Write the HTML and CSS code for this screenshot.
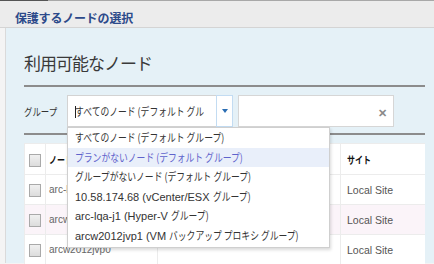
FILE: index.html
```
<!DOCTYPE html>
<html lang="ja">
<head>
    <meta charset="UTF-8">
    <title>保護するノードの選択</title>
    <link rel="stylesheet" href="styles.css">
</head>
<body>

<div class="topline"><span class="tab-edge"></span></div>
<header class="wizard-title">保護するノードの選択</header>

<div class="panel">
    <h2>利用可能なノード</h2>
    <div class="rule first"></div>

    <div class="filter-row">
        <label class="filter-label"><span class="t">グループ</span></label>
        <div class="combo">
            <div class="combo-text"><span class="caret"></span><span class="t">すべてのノード (デフォルト グループ)</span></div>
            <div class="combo-btn"><span class="arrow"></span></div>

            <!-- open list, drawn over the table -->
            <ul class="combo-list">
                <li><span class="t">すべてのノード (デフォルト グループ)</span></li>
                <li class="hover"><span class="t">プランがないノード (デフォルト グループ)</span></li>
                <li><span class="t">グループがないノード (デフォルト グループ)</span></li>
                <li><span class="en">10.58.174.68 (vCenter/ESX </span><span class="t">グループ)</span></li>
                <li><span class="en">arc-lqa-j1 (Hyper-V </span><span class="t">グループ)</span></li>
                <li><span class="en">arcw2012jvp1 (VM </span><span class="t">バックアップ プロキシ グループ)</span></li>
            </ul>
        </div>
        <div class="search">
            <span class="clear">&#x2715;</span>
        </div>
    </div>

    <div class="rule second"></div>

    <table class="node-table">
        <tr class="head">
            <td class="chk"><span class="box"></span></td>
            <td class="name"><span class="t">ノード名</span></td>
            <td class="mid"></td>
            <td class="site"><span class="t">サイト</span></td>
        </tr>
        <tr>
            <td class="chk"><span class="box"></span></td>
            <td class="name">arc-lqa-j1</td>
            <td class="mid"></td>
            <td class="site">Local Site</td>
        </tr>
        <tr class="alt">
            <td class="chk"><span class="box"></span></td>
            <td class="name">arcw2012jvp1</td>
            <td class="mid"></td>
            <td class="site">Local Site</td>
        </tr>
        <tr>
            <td class="chk"><span class="box"></span></td>
            <td class="name">arcw2012jvp0</td>
            <td class="mid"></td>
            <td class="site">Local Site</td>
        </tr>
    </table>
</div>

</body>
</html>
```

FILE: styles.css
```
body {
    margin: 0;
    width: 434px;
    height: 264px;
    overflow: hidden;
    background-color: #f4f4f4;
    font-family: "Noto Sans CJK JP", "Liberation Sans", sans-serif;
    color: #333;
}
/* the UI font is narrow, so squeeze the CJK runs */
.t {
    display: inline-block;
    transform: scaleX(0.8);
    transform-origin: left center;
    white-space: nowrap;
}
.en {
    font-family: "Liberation Sans", sans-serif;
    font-size: 11px;
    white-space: pre;
}
.topline {
    height: 1px;
    background-color: #a8a8a8;
}
.tab-edge {
    display: block;
    width: 48px;
    height: 1px;
    background-color: #555;
}
.wizard-title {
    height: 27px;
    box-sizing: border-box;
    padding: 9px 0 0 15px;
    background-color: #ececec;
    border-bottom: 1px solid #d4d4d4;
    color: #2d4a8a;
    font-size: 12px;
    font-weight: bold;
    line-height: 16px;
    letter-spacing: -0.2px;
}
.panel {
    margin-left: 5px;
    height: 235px;
    box-sizing: border-box;
    padding: 24px 9px 0 18px;
    background-color: #e5f1f7;
    border-left: 1px solid #dadada;
}
h2 {
    margin: 0;
    font-size: 17px;
    font-weight: normal;
    line-height: 22px;
    letter-spacing: -1px;
    color: #3a3a3a;
}
.rule {
    height: 2px;
    background-color: #8c8c8c;
}
.rule.first {
    margin-top: 11px;
}
.rule.second {
    margin-top: 6px;
}
.filter-row {
    display: flex;
    align-items: center;
    margin-top: 8px;
    height: 32px;
}
.filter-label {
    width: 43px;
    font-size: 10.5px;
    color: #333;
}
.combo {
    position: relative;
    display: flex;
    width: 166px;
    height: 32px;
    box-sizing: border-box;
    background-color: white;
    border: 1px solid #d3d3d3;
}
.combo-text {
    flex: 1;
    overflow: hidden;
    white-space: nowrap;
    margin-right: 12px;
    padding-left: 7px;
    font-size: 11px;
    line-height: 30px;
    color: #333;
}
.caret {
    display: inline-block;
    width: 1px;
    height: 12px;
    margin-right: -1px;
    vertical-align: -2px;
    background-color: #222;
}
.combo-btn {
    width: 15px;
    display: flex;
    align-items: center;
    justify-content: center;
    border: 1px solid #c3dcf2;
    margin: -1px -1px -1px 0;
}
.arrow {
    width: 0;
    height: 0;
    border-left: 3px solid transparent;
    border-right: 3px solid transparent;
    border-top: 4px solid #2a6db3;
}
.combo-list {
    position: absolute;
    left: -1px;
    top: 31px;
    z-index: 2;
    width: 261px;
    margin: 0;
    padding: 0 0 2px 0;
    list-style: none;
    background-color: white;
    border: 1px solid #cfcfcf;
    box-shadow: 1px 2px 3px rgba(0, 0, 0, 0.15);
}
.combo-list li {
    height: 19.5px;
    padding-left: 7px;
    font-size: 11px;
    line-height: 19.5px;
    white-space: nowrap;
    overflow: hidden;
    color: #333;
}
.combo-list li.hover {
    background-color: #e9effa;
    color: #5f63cc;
}
.search {
    position: relative;
    width: 156px;
    height: 32px;
    margin-left: 5px;
    box-sizing: border-box;
    background-color: white;
    border: 1px solid #d6d6d6;
}
.clear {
    position: absolute;
    right: 6px;
    top: 8px;
    font-size: 11px;
    font-weight: bold;
    color: #8a8a8a;
}
.node-table {
    width: 401px;
    margin-top: 8px;
    border-collapse: collapse;
    background-color: white;
    font-size: 10px;
}
.node-table td {
    height: 29px;
    padding: 0;
    border-top: 1px solid #ececec;
    border-left: 1px solid #ececec;
}
.node-table tr.alt td {
    background-color: #fbf4f9;
}
.node-table .chk {
    width: 20px;
    text-align: center;
}
.node-table .name {
    width: 108px;
    padding-left: 3px;
    color: #666;
    font-family: "Liberation Sans", sans-serif;
}
.node-table .site {
    width: 78px;
    padding-left: 6px;
    color: #555;
    font-family: "Liberation Sans", sans-serif;
    font-size: 10.5px;
}
.node-table .head td {
    height: 30px;
    color: #111;
    font-weight: bold;
    font-family: "Noto Sans CJK JP", sans-serif;
    font-size: 10px;
}
.box {
    display: inline-block;
    width: 10px;
    height: 11px;
    vertical-align: middle;
    border: 1px solid #a9a9a9;
    background: linear-gradient(#f0f0f0, #dcdcdc);
}
```
